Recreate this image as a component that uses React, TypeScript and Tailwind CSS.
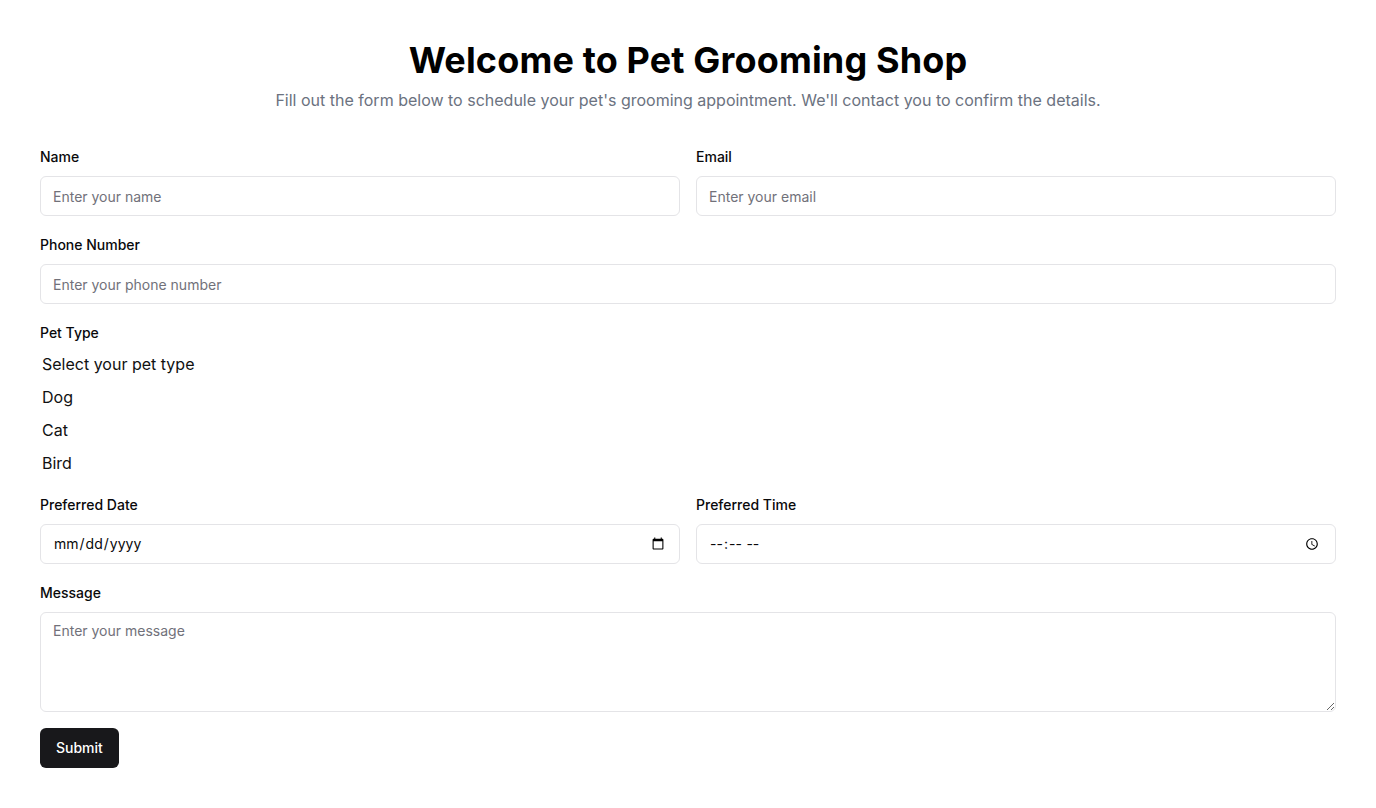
import { useState } from "react";

function Field({
  label,
  children,
}: {
  label: string;
  children: React.ReactNode;
}) {
  return (
    <div className="flex flex-col">
      <label className="block pt-px text-sm font-medium leading-5 text-[#09090b]">
        {label}
      </label>
      <div className="mt-[9px]">{children}</div>
    </div>
  );
}

const inputCls =
  "h-10 w-full rounded-md border border-[#e4e4e7] bg-white px-3 text-sm text-[#09090b] placeholder:text-[#71717a] outline-none";

export default function App() {
  const [form, setForm] = useState({
    name: "",
    email: "",
    phone: "",
    date: "",
    time: "",
    message: "",
  });

  function update(key: string, value: string) {
    setForm({ ...form, [key]: value });
  }

  return (
    <div className="min-h-screen bg-white font-['Inter',sans-serif] text-[#09090b]">
      <div className="px-10 pt-10 pb-10">

        <div className="text-center">
          <h1 className="text-4xl font-bold leading-10 tracking-[0.15px] text-black">
            Welcome to Pet Grooming Shop
          </h1>
          <p className="mt-2 text-base leading-6 text-[#6b7280]">
            Fill out the form below to schedule your pet's grooming appointment. We'll contact you to confirm the details.
          </p>
        </div>

        <form
          className="mt-[34px] flex flex-col gap-[18px]"
          onSubmit={(e) => e.preventDefault()}
        >

          <div className="grid grid-cols-2 gap-4">
            <Field label="Name">
              <input
                className={inputCls}
                placeholder="Enter your name"
                value={form.name}
                onChange={(e) => update("name", e.target.value)}
              />
            </Field>
            <Field label="Email">
              <input
                type="email"
                className={inputCls}
                placeholder="Enter your email"
                value={form.email}
                onChange={(e) => update("email", e.target.value)}
              />
            </Field>
          </div>

          <Field label="Phone Number">
            <input
              className={inputCls}
              placeholder="Enter your phone number"
              value={form.phone}
              onChange={(e) => update("phone", e.target.value)}
            />
          </Field>

          <div className="flex flex-col pb-px">
            <label className="block pt-px text-sm font-medium leading-5">
              Pet Type
            </label>
            <div className="mt-[9px] flex flex-col gap-[9px] pl-[2px] text-base leading-6 text-[#111]">
              <div>Select your pet type</div>
              <div>Dog</div>
              <div>Cat</div>
              <div>Bird</div>
            </div>
          </div>

          <div className="grid grid-cols-2 gap-4">
            <Field label="Preferred Date">
              <input
                type="date"
                className={inputCls}
                value={form.date}
                onChange={(e) => update("date", e.target.value)}
              />
            </Field>
            <Field label="Preferred Time">
              <input
                type="time"
                className={inputCls}
                value={form.time}
                onChange={(e) => update("time", e.target.value)}
              />
            </Field>
          </div>

          <Field label="Message">
            <textarea
              className="block h-[100px] w-full rounded-md border border-[#e4e4e7] bg-white px-3 py-2 text-sm leading-5 placeholder:text-[#71717a] outline-none"
              placeholder="Enter your message"
              value={form.message}
              onChange={(e) => update("message", e.target.value)}
            />
          </Field>

          <div className="-mt-[2px]">
            <button
              type="submit"
              className="h-10 rounded-md bg-[#18181b] px-4 text-sm font-medium text-white"
            >
              Submit
            </button>
          </div>

        </form>

      </div>
    </div>
  );
}
